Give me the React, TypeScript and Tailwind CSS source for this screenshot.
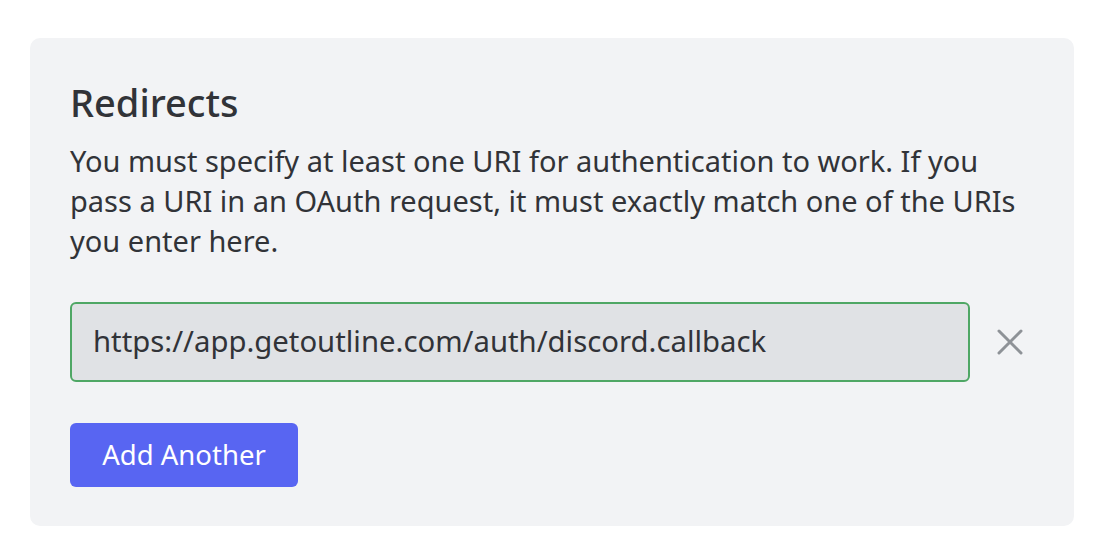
import React from "react";

export default function App() {
  return (
    <div className="w-[1104px] h-[560px] bg-white pt-[38px] px-[30px]" style={{ fontFamily: '"Noto Sans", sans-serif' }}>
      <div className="w-[1044px] h-[488px] bg-[#f2f3f5] rounded-[10px] px-[40px] pt-[40px]">
        <h2 className="text-[38px] leading-[48px] font-medium text-[#313338]">Redirects</h2>
        <p className="mt-[15px] text-[29px] leading-[40px] text-[#313338] whitespace-nowrap">
          You must specify at least one URI for authentication to work. If you
          <br />
          pass a URI in an OAuth request, it must exactly match one of the URIs
          <br />
          you enter here.
        </p>
        <div className="mt-[41px] flex items-center">
          <div className="w-[900px] h-[80px] rounded-[6px] border-2 border-[#4fa765] bg-[#e0e2e5] flex items-center px-[21px] text-[29.3px] text-[#313338]">
            https://app.getoutline.com/auth/discord.callback
          </div>
          <svg className="ml-[27px]" width="26" height="26" viewBox="0 0 26 26" fill="none" stroke="#8e9297" strokeWidth="3" strokeLinecap="round">
            <path d="M2 2L24 24M24 2L2 24" />
          </svg>
        </div>
        <button className="mt-[41px] h-[64px] w-[228px] rounded-[6px] bg-[#5865f2] text-white text-[27.5px]">Add Another</button>
      </div>
    </div>
  );
}
